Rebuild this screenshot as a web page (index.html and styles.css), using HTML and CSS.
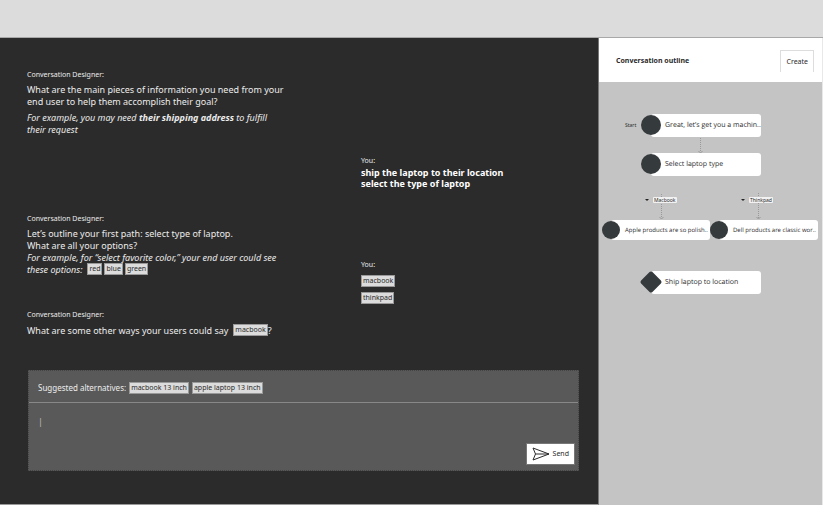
FILE: index.html
```
<!DOCTYPE html>
<html lang="en">

<head>
    <meta charset="UTF-8">
    <meta name="viewport" content="width=device-width, initial-scale=1.0">
    <title>Conversation designer</title>
    <link rel="stylesheet" href="styles.css">
</head>

<body>
    <header class="topbar"></header>
    <div class="workspace">
        <main class="chat">
            <div class="chat__log">
                <div class="chat__col">
                    <section class="message">
                        <h2 class="message__author">Conversation Designer:</h2>
                        <p>What are the main pieces of information you need from your<br>end user to help them accomplish their goal?</p>
                        <p class="message__hint message__hint--spaced">For example, you may need <strong>their shipping address</strong> to fulfill<br>their request</p>
                    </section>
                    <section class="message message--options">
                        <h2 class="message__author">Conversation Designer:</h2>
                        <p>Let’s outline your first path: select type of laptop.<br>What are all your options?</p>
                        <p class="message__hint message__hint--tight">For example, for “select favorite color,” your end user could see</p>
                        <div class="message__row"><span class="message__hint">these options:</span>
                            <span class="chips"><span class="chip">red</span><span class="chip">blue</span><span class="chip">green</span></span>
                        </div>
                    </section>
                    <section class="message message--synonyms">
                        <h2 class="message__author">Conversation Designer:</h2>
                        <div class="message__row">What are some other ways your users could say
                            <span class="chips"><span class="chip">macbook</span></span><span class="message__mark">?</span>
                        </div>
                    </section>
                </div>
                <div class="chat__col chat__col--you">
                    <section class="reply">
                        <h2 class="reply__author">You:</h2>
                        <p class="reply__text">ship the laptop to their location<br>select the type of laptop</p>
                    </section>
                    <section class="reply">
                        <h2 class="reply__author">You:</h2>
                        <div class="reply__chips">
                            <span class="chip">macbook</span>
                            <span class="chip">thinkpad</span>
                        </div>
                    </section>
                </div>
            </div>
            <form action="#" class="composer">
                <div class="composer__suggestions">
                    <span>Suggested alternatives:</span>
                    <button type="button" class="chip">macbook 13 inch</button>
                    <button type="button" class="chip">apple laptop 13 inch</button>
                </div>
                <div class="composer__body">
                    <textarea class="composer__input" aria-label="Your message">|</textarea>
                    <button type="submit" class="send">
                        <svg class="send__icon" viewBox="0 0 18 14" aria-hidden="true">
                            <path d="M1 1 L17 7 L1 13 L3.5 7 Z M3.5 7 H17" />
                        </svg>
                        Send
                    </button>
                </div>
            </form>
        </main>
        <aside class="outline">
            <div class="outline__head">
                <h1 class="outline__title">Conversation outline</h1>
                <button type="button" class="create">Create</button>
            </div>
            <div class="canvas">
                <svg class="canvas__lines" width="223" height="150" aria-hidden="true">
                    <path d="M101.500 56 V70 M62.500 112 V136 M159.500 111 V136" />
                    <path class="canvas__arrows" d="M99.500 69 L101.500 71 L103.500 69 M60.500 135 L62.500 137 L64.500 135 M157.500 135 L159.500 137 L161.500 135" />
                </svg>
                <span class="canvas__start">Start</span>
                <div class="node node--start"><i class="node__dot"></i>Great, let’s get you a machin..</div>
                <div class="node node--select"><i class="node__dot"></i>Select laptop type</div>
                <span class="branch branch--macbook"><i class="branch__caret"></i><span class="branch__label">Macbook</span></span>
                <span class="branch branch--thinkpad"><i class="branch__caret"></i><span class="branch__label">Thinkpad</span></span>
                <div class="node node--small node--apple"><i class="node__dot"></i>Apple products are so polish..</div>
                <div class="node node--small node--dell"><i class="node__dot"></i>Dell products are classic wor..</div>
                <div class="node node--ship"><i class="node__diamond"></i>Ship laptop to location</div>
            </div>
        </aside>
    </div>
</body>

</html>
```
FILE: styles.css
```
* {
    margin: 0;
    padding: 0;
    box-sizing: border-box;
}

body {
    min-height: 100vh;
    display: flex;
    flex-direction: column;
    padding-bottom: 10px;
    background: #fff;
    font-family: "Noto Sans", sans-serif;
    font-size: 9px;
    line-height: 12px;
    color: #2b2b2b;
}

button,
textarea {
    font: inherit;
    color: inherit;
}

.topbar {
    height: 38px;
    background: #dcdcdc;
    border-bottom: 1px solid #a8a8a8;
}

.workspace {
    flex: 1;
    display: grid;
    grid-template-columns: 1fr 224px;
}

/* chat */
.chat {
    display: flex;
    flex-direction: column;
    justify-content: space-between;
    padding: 31px 19px 33px 27px;
    background: #2b2b2b;
    color: #ececec;
    border-right: 1px solid #777;
    border-bottom: 1px solid #999;
}

.chat__log {
    display: grid;
    grid-template-columns: 334px 1fr;
}

.chat__col--you {
    padding-top: 86px;
}

.message__author,
.reply__author {
    font-size: 7px;
    font-weight: 400;
}

.message__author {
    margin-bottom: 3px;
}

.message--options {
    margin-top: 77px;
}

.message--synonyms {
    margin-top: 34px;
}

.message__hint {
    font-style: italic;
}

.message__hint--spaced {
    margin-top: 4px;
}

.message__hint--tight {
    line-height: 11px;
}

.message__row {
    display: flex;
    align-items: center;
    line-height: 11px;
}

.chips {
    display: flex;
    gap: 2px;
    margin-left: 5px;
}

.chip {
    padding: 0 1px;
    background: #dcdcdc;
    border: 1px solid #999;
    color: #2b2b2b;
    font-size: 7px;
    line-height: 10px;
}

.reply__text {
    font-weight: 700;
    line-height: 11px;
    color: #fff;
}

.reply + .reply {
    margin-top: 70px;
}

.reply__chips {
    display: flex;
    flex-direction: column;
    align-items: flex-start;
    gap: 5px;
    margin-top: 4px;
}

/* message composer */
.composer {
    background: #595959;
    border: 1px dotted #444;
    margin-left: 1px;
}

.composer__suggestions {
    display: flex;
    align-items: center;
    gap: 3px;
    height: 32px;
    padding: 2px 9px 0;
    border-bottom: 1px solid #888;
    font-size: 8px;
}

.composer__body {
    display: flex;
    align-items: flex-end;
    padding: 13px 3px 5px 9px;
}

.composer__input {
    flex: 1;
    height: 49px;
    background: none;
    border: none;
    outline: none;
    resize: none;
    color: #bbb;
}

.send {
    display: flex;
    align-items: center;
    gap: 3px;
    height: 22px;
    padding: 0 5px;
    background: #fff;
    border: 1px solid #777;
    color: #2b2b2b;
    font-size: 7px;
}

.send__icon {
    width: 18px;
    height: 14px;
    fill: none;
    stroke: #2b2b2b;
}

/* outline */
.outline {
    display: flex;
    flex-direction: column;
    background: #c4c4c4;
    border-right: 1px solid #e8e8e8;
}

.outline__head {
    display: flex;
    justify-content: space-between;
    align-items: center;
    height: 44px;
    padding: 2px 8px 0 17px;
    background: #fff;
}

.outline__title {
    font-size: 7px;
    font-weight: 700;
}

.create {
    height: 22px;
    padding: 0 5px;
    background: #fff;
    border: 1px solid #ddd;
    border-bottom: none;
    font-size: 7px;
}

.canvas {
    position: relative;
    flex: 1;
}

.canvas__lines {
    position: absolute;
    left: 0;
    top: 0;
    fill: none;
    stroke: #999;
    stroke-dasharray: 1 1;
}

.canvas__arrows {
    stroke-dasharray: none;
}

.canvas__start {
    position: absolute;
    left: 26px;
    top: 37px;
    font-size: 5px;
}

.node {
    position: absolute;
    left: 52px;
    width: 110px;
    height: 23px;
    padding-left: 14px;
    background: #fff;
    border-radius: 3px;
    font-size: 7px;
    line-height: 23px;
    white-space: nowrap;
    font-family: "Open Sans", "Noto Sans", sans-serif;
    text-rendering: geometricPrecision;
}

.node__dot,
.node__diamond {
    position: absolute;
    background: #353a3c;
}

.node__dot {
    left: -10px;
    top: 1px;
    width: 20px;
    height: 20px;
    border-radius: 50%;
}

.node__diamond {
    left: -8px;
    top: 3px;
    width: 16px;
    height: 16px;
    border-radius: 2px;
    transform: rotate(45deg);
}

.node--small {
    width: 99px;
    height: 20px;
    font-size: 6px;
    line-height: 20px;
}

.node--small .node__dot {
    left: -9px;
    width: 18px;
    height: 18px;
}

.node--start {
    top: 32px;
}

.node--select {
    top: 71px;
}

.node--apple {
    left: 12px;
    top: 138px;
}

.node--dell {
    left: 120px;
    top: 138px;
}

.node--ship {
    top: 189px;
}

.branch {
    position: absolute;
    top: 115px;
    display: flex;
    align-items: center;
    gap: 4px;
}

.branch--macbook {
    left: 46px;
}

.branch--thinkpad {
    left: 142px;
}

.branch__caret {
    border: 2px solid transparent;
    border-top-color: #222;
    border-bottom: none;
}

.branch__label {
    padding: 0 1px;
    background: #f2f2f2;
    border-radius: 1px;
    font-size: 5px;
    line-height: 6px;
}
```
